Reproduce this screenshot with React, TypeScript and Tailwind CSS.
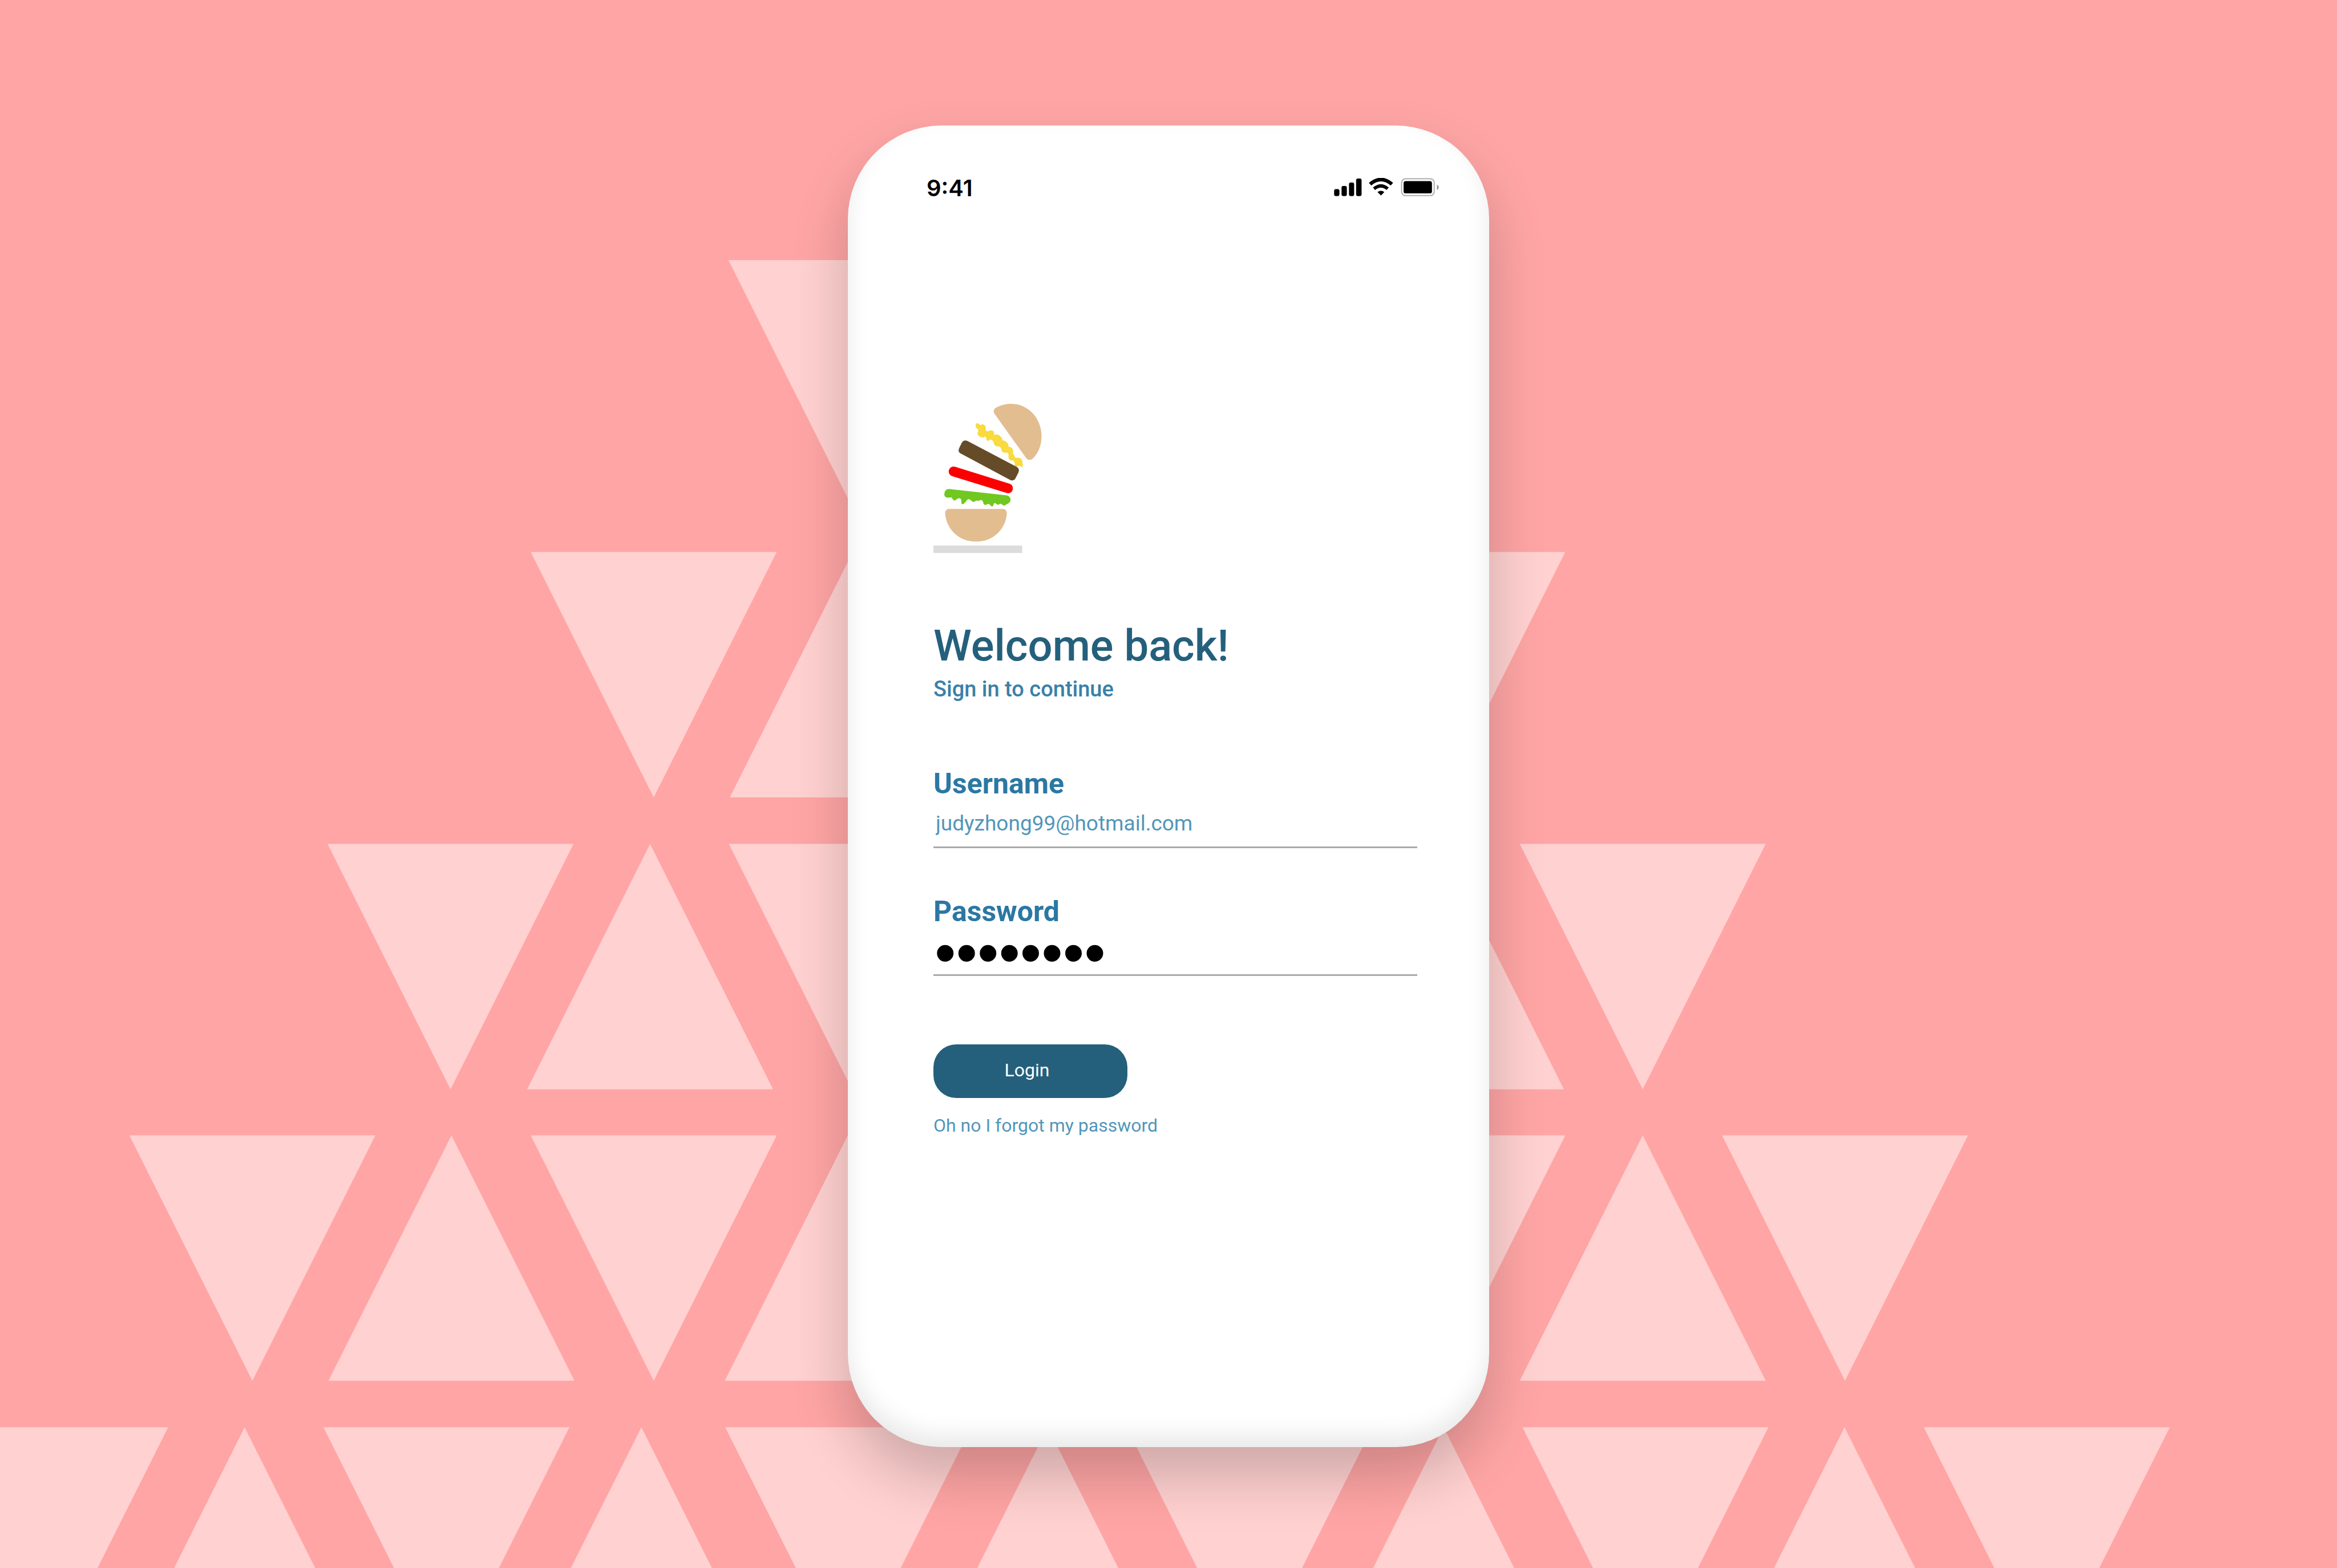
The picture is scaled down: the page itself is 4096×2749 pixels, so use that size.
import type { InputHTMLAttributes } from "react";

const SIZE = 540;

type Row = { top: number; down: number[]; up: number[] };

const rows: Row[] = [
  { top: 571, down: [1599], up: [] },
  { top: 1212, down: [1165, 2896], up: [1602] },
  { top: 1853, down: [719, 1600, 3336], up: [1157, 2893] },
  { top: 2493, down: [284, 1165, 2896, 3780], up: [721, 1591, 3336] },
  { top: 3134, down: [-171, 710, 1592, 2473, 3342, 4223], up: [267, 1138, 2030, 2899, 3779] },
];

function TrianglePattern() {
  return (
    <svg
      aria-hidden="true"
      viewBox="0 0 5130 3443"
      preserveAspectRatio="xMidYMid slice"
      className="absolute inset-0 h-full w-full fill-[#ffd1d0]"
    >
      {rows.map(({ top, down, up }) => (
        <g key={top}>
          {down.map((x) => (
            <path key={`d${x}`} d={`M${x} ${top}h${SIZE}l${-SIZE / 2} ${SIZE - 1}z`} />
          ))}
          {up.map((x) => (
            <path key={`u${x}`} d={`M${x} ${top + SIZE - 1}h${SIZE}l${-SIZE / 2} ${1 - SIZE}z`} />
          ))}
        </g>
      ))}
    </svg>
  );
}

function StatusIcons() {
  return (
    <svg aria-hidden="true" viewBox="84 60 692 122" className="w-[184px]">
      <rect x="85" y="133" width="35" height="46" rx="12" />
      <rect x="134" y="113" width="35" height="66" rx="12" />
      <rect x="183" y="90" width="34" height="89" rx="11" />
      <rect x="230" y="64" width="36" height="115" rx="11" />
      <path d="M322 101Q394 40 466 101" fill="none" stroke="#000" strokeWidth="24" />
      <path d="M348 131Q394 94 438 131" fill="none" stroke="#000" strokeWidth="22" />
      <path d="M371 153Q394 136 416 153L394 176Z" />
      <rect x="530" y="65" width="215" height="112" rx="26" fill="none" stroke="#b4b4b4" strokeWidth="8" />
      <rect x="543" y="81" width="187" height="81" rx="14" />
      <path d="M763 103Q775 111 775 122T763 141Z" fill="#8f8f8f" />
    </svg>
  );
}

function BurgerLogo() {
  return (
    <svg role="img" aria-label="Stacked burger" viewBox="88 82 712 980" className="w-[190px]">
      <path
        fill="#e2bd90"
        d="M488 146C480 132 484 116 498 108C528 91 562 82 597 82C710 82 798 176 798 296C798 352 779 404 742 441C728 455 708 453 697 438Z"
      />
      <path
        fill="#f9da3f"
        d="M366 226C363 212 375 203 387 214C391 222 399 223 405 218C420 213 434 227 431 245C430 256 436 263 445 263C456 254 478 252 486 266C482 277 486 285 494 286C508 279 521 286 528 297C538 302 541 312 541 322C553 322 569 331 577 344C582 352 578 361 587 366C601 364 609 377 611 389C608 404 613 416 621 423C619 434 628 439 636 436C653 433 670 444 673 460C669 468 677 476 675 486L670 504L663 493C650 486 643 488 633 497C623 498 619 488 623 476C622 464 616 455 607 454C594 457 579 445 581 428C583 414 580 405 571 402C559 406 541 403 536 390C537 375 526 363 517 360C505 366 490 357 486 345C486 332 477 322 467 317C461 314 456 319 451 324C443 329 433 320 435 309C438 300 426 293 420 301C399 306 379 294 377 274C385 261 385 248 373 242C366 238 364 232 366 226Z"
      />
      <path
        fill="#664b29"
        d="M274 338C282 324 296 318 311 326L633 495C648 503 653 516 647 532L627 571C620 584 608 589 594 583L265 407C253 400 250 389 257 373Z"
      />
      <path d="M220 526L578 637" stroke="#fb0000" strokeWidth="64" strokeLinecap="round" fill="none" />
      <path
        fill="#70c820"
        d="M160 675C161 654 171 641 189 641L570 683C587 686 597 702 594 717C590 733 577 738 568 742C558 753 546 755 538 742C527 735 520 742 512 746L491 733C480 735 488 749 474 757C464 756 461 744 451 740C442 738 435 748 426 746C413 741 417 724 408 716C394 711 388 721 379 719C366 715 364 722 353 727C340 726 334 711 319 708C303 710 303 735 278 742C267 738 274 720 269 708C258 697 245 703 240 710L227 718C216 717 215 705 206 697C185 700 172 699 165 692C160 687 159 681 160 675Z"
      />
      <path
        fill="#e2bd90"
        d="M193 772H542C560 772 571 785 570 803C563 904 481 987 368 987C254 987 173 904 165 803C164 784 175 772 193 772Z"
      />
      <rect x="88" y="1013" width="583" height="49" fill="#dcdcdc" />
    </svg>
  );
}

type FieldProps = InputHTMLAttributes<HTMLInputElement> & { label: string; textClass: string };

function Field({ id, label, textClass, ...rest }: FieldProps) {
  return (
    <div className="flex flex-col">
      <label htmlFor={id} className="text-[50px] leading-[60px] font-bold text-[#2b78a2]">
        {label}
      </label>
      <input
        id={id}
        className={`h-[83px] w-full border-b-[3px] border-[#aaaaaa] bg-transparent outline-none ${textClass}`}
        {...rest}
      />
    </div>
  );
}

export default function App() {
  return (
    <main className="relative flex min-h-screen items-start justify-center overflow-hidden bg-[#ffa5a5] pt-[220px] font-['Roboto',sans-serif]">
      <TrianglePattern />
      <section className="relative w-full max-w-[1124px] rounded-[164px] bg-white pt-[86px] pr-[126px] pb-[544px] pl-[150px] shadow-[0_50px_100px_rgba(0,0,0,0.2),inset_0_-20px_40px_rgba(0,0,0,0.09)]">
        <header className="-mr-[38px] -ml-3 flex h-12 items-start justify-between">
          <time className="font-['Inter',sans-serif] text-[40px] leading-[48px] font-semibold text-black">9:41</time>
          <div className="pt-1.5">
            <StatusIcons />
          </div>
        </header>

        <div className="mt-[354px]">
          <BurgerLogo />
        </div>

        <h1 className="mt-[118px] text-[76px] leading-[88px] font-medium text-[#24607c]">Welcome back!</h1>
        <p className="mt-2 text-[38px] leading-[48px] font-medium text-[#3a80a8]">Sign in to continue</p>

        <form className="mt-28 flex flex-col items-stretch" onSubmit={(event) => event.preventDefault()}>
          <div className="flex flex-col gap-[81px]">
            <Field
              id="username"
              label="Username"
              type="text"
              autoComplete="username"
              defaultValue="judyzhong99@hotmail.com"
              textClass="px-1 text-[37px] text-[#5296b9]"
            />
            <Field
              id="password"
              label="Password"
              type="password"
              autoComplete="current-password"
              defaultValue="password"
              textClass="px-0.5 pt-1 font-['Liberation_Sans',sans-serif] text-[107px] leading-[80px] text-black"
            />
          </div>
          <button
            type="submit"
            className="mt-[120px] h-[94px] w-[340px] rounded-[40px] bg-[#24607c] pr-3 pb-1 text-[32px] leading-[40px] text-white"
          >
            Login
          </button>
          <a href="#forgot" className="mt-7 self-start text-[32px] leading-[40px] text-[#5296b9]">
            Oh no I forgot my password
          </a>
        </form>
      </section>
    </main>
  );
}
